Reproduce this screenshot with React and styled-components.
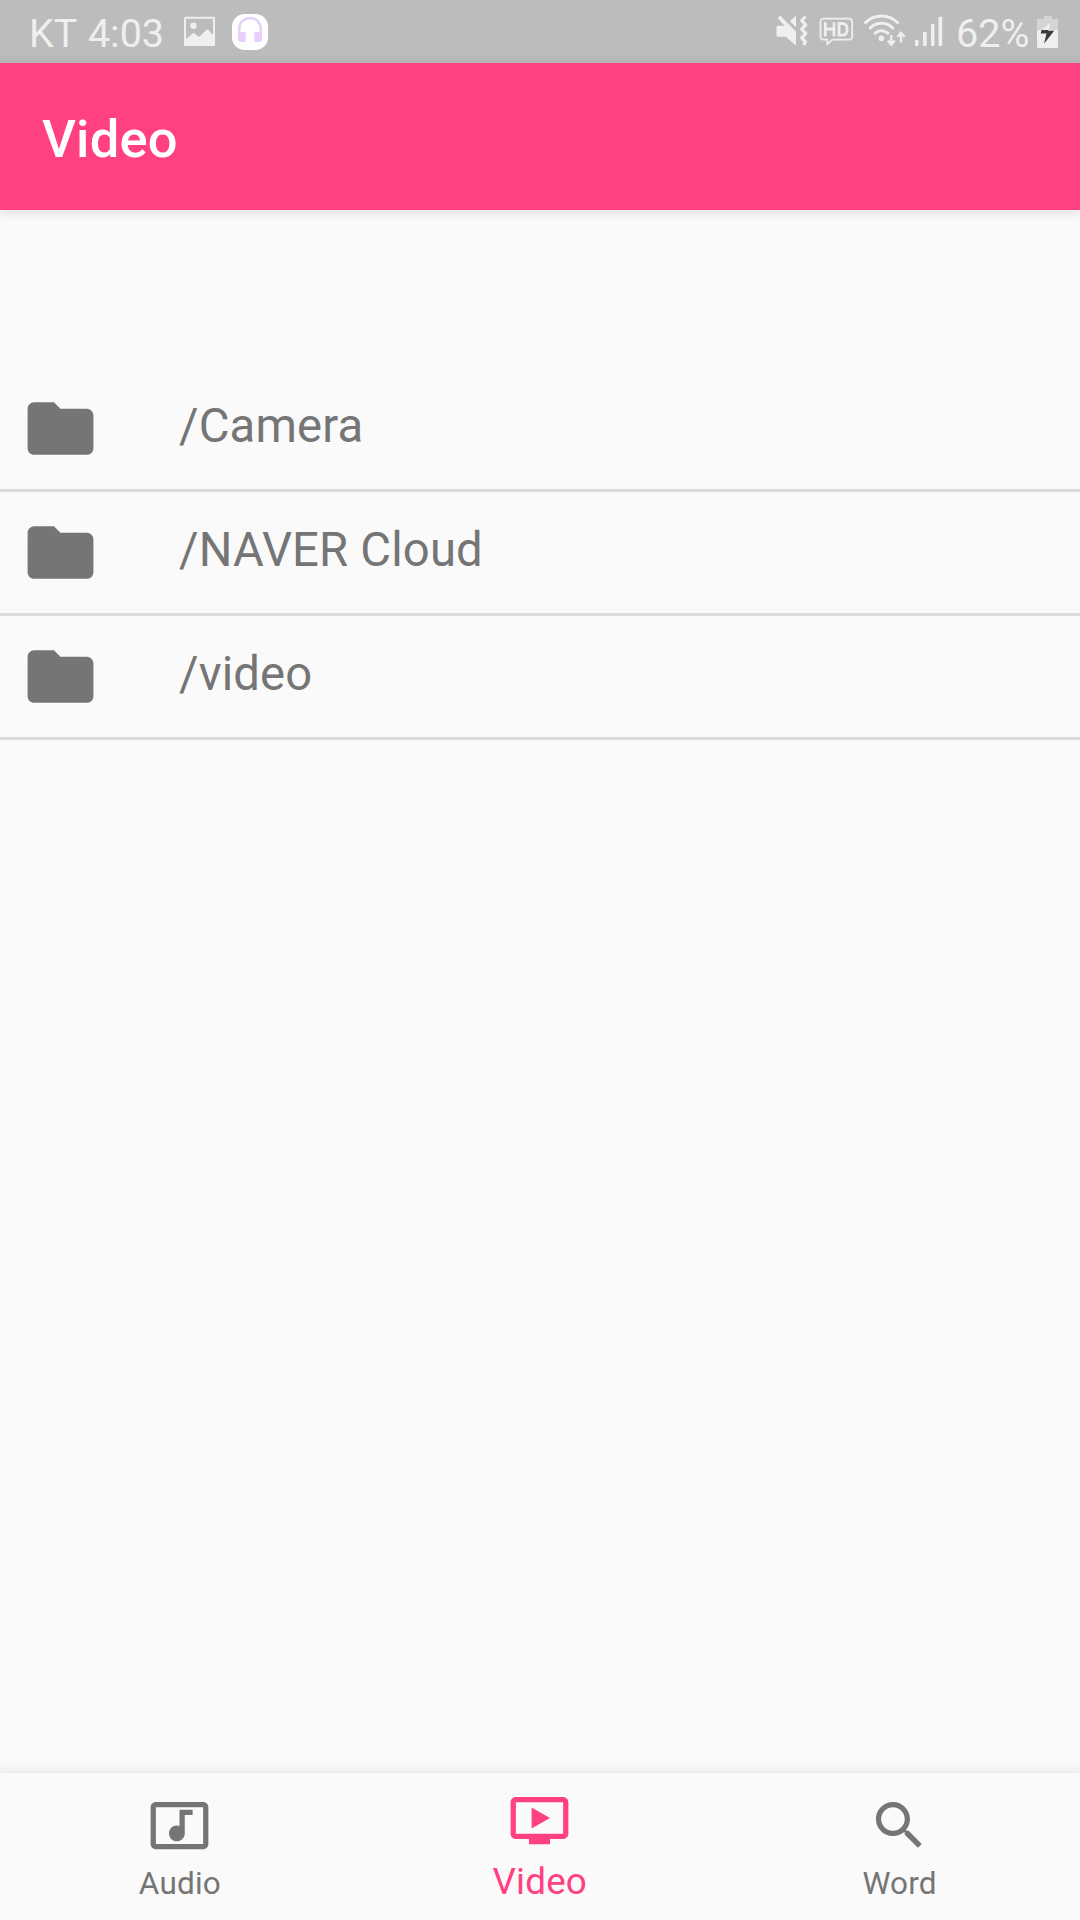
// App.jsx
import { useState } from "react";
import styled, { createGlobalStyle } from "styled-components";

const folders = ["/Camera", "/NAVER Cloud", "/video"];

const tabs = [
    {
        name: "Audio",
        path: "M21 3H3c-1.1 0-2 .9-2 2v14c0 1.1.9 2 2 2h18c1.1 0 2-.9 2-2V5c0-1.1-.9-2-2-2zm0 16H3V5h18v14zM8 15c0-1.66 1.34-3 3-3 .35 0 .69.07 1 .18V6h5v2h-3v7.03c-.02 1.64-1.35 2.97-3 2.97-1.66 0-3-1.34-3-3z",
    },
    {
        name: "Video",
        path: "M21 3H3c-1.11 0-2 .89-2 2v12c0 1.1.89 2 2 2h5v2h8v-2h5c1.1 0 1.99-.9 1.99-2L23 5c0-1.11-.9-2-2-2zm0 14H3V5h18v12zm-5-6l-7 4V7z",
    },
    {
        name: "Word",
        path: "M15.5 14h-.79l-.28-.27C15.41 12.59 16 11.11 16 9.5 16 5.91 13.09 3 9.5 3S3 5.91 3 9.5 5.91 16 9.5 16c1.61 0 3.09-.59 4.23-1.57l.27.28v.79l5 4.99L20.49 19l-4.99-5zm-6 0C7.01 14 5 11.99 5 9.5S7.01 5 9.5 5 14 7.01 14 9.5 11.99 14 9.5 14z",
    },
];

function PictureIcon() {
    return (
        <svg width="31" height="63" viewBox="0 0 31 63" fill="#efefef">
            <path
                fillRule="evenodd"
                d="M1.5 16.7h28a1.5 1.5 0 0 1 1.5 1.5v26.3a1.5 1.5 0 0 1-1.5 1.5h-28A1.5 1.5 0 0 1 0 44.5V18.2a1.5 1.5 0 0 1 1.5-1.5zM2 18.7V39l7.5-6.3 5.5 4.2 8.5-8 5.5 6.2V18.7z"
            />
            <circle cx="9.5" cy="25.7" r="3.2" />
        </svg>
    );
}

function HeadphonesIcon() {
    return (
        <svg width="36" height="63" viewBox="0 0 36 63">
            <rect y="14" width="36" height="36" rx="12.5" fill="#fff" />
            <path d="M7.2 33v-4.2a10.8 10.8 0 0 1 21.6 0V33" fill="none" stroke="#e6d2f8" strokeWidth="2.6" />
            <path d="M6 32h7.7v10H9a3 3 0 0 1-3-3zM22.3 32H30v7a3 3 0 0 1-3 3h-4.7z" fill="#e9cffc" />
        </svg>
    );
}

function MuteIcon() {
    return (
        <svg width="32" height="63" viewBox="0 0 32 63" fill="#efefef">
            <path d="M3.8 15.3L20 31.5v14L9.8 36.7H2a1.5 1.5 0 0 1-1.5-1.5v-8A1.5 1.5 0 0 1 2 25.7h6.6L1.8 18.2zM14 21.2l6-5.7v11.7z" />
            <path d="M29.5 16.5l-3.8 4 4 4.3-4 4.4 4 4.4-4 4.3 3.8 3.9-2 3" fill="none" stroke="#efefef" strokeWidth="3.2" strokeLinejoin="round" />
        </svg>
    );
}

function HdIcon() {
    return (
        <svg width="35" height="63" viewBox="0 0 35 63" fill="none" stroke="#efefef">
            <path d="M4.5 18.7h25.7a3 3 0 0 1 3 3v15a3 3 0 0 1-3 3H13.3l-5 4.6v-4.6H4.5a3 3 0 0 1-3-3v-15a3 3 0 0 1 3-3z" strokeWidth="1.8" strokeLinejoin="round" />
            <path d="M6.3 22.3v14M15 22.3v14M6.3 29H15M20 23.5v11.6h3.6a4.3 4.3 0 0 0 4.4-4.3v-3a4.3 4.3 0 0 0-4.4-4.3z" strokeWidth="2.8" />
        </svg>
    );
}

function WifiIcon() {
    return (
        <svg width="42" height="63" viewBox="0 0 42 63" fill="none" stroke="#efefef">
            <path d="M1.5 22.5a22.8 22.8 0 0 1 32 0M6.3 28a15.8 15.8 0 0 1 22.4 0M11.3 33.2a9.2 9.2 0 0 1 12.4 0" strokeWidth="3" strokeLinecap="round" />
            <circle cx="17.4" cy="38.3" r="2.9" fill="#efefef" stroke="none" />
            <path d="M27.3 35v9.5M23.8 40.5l3.5 4.2 3.5-4.2M37 42.5V33M33.3 37l3.7-4.2 3.7 4.2" strokeWidth="2.3" />
        </svg>
    );
}

function SignalIcon() {
    return (
        <svg width="28" height="63" viewBox="0 0 28 63" fill="#efefef">
            <rect x="0" y="40" width="3.6" height="6" rx="1" />
            <rect x="8" y="31.7" width="3.7" height="14.3" rx="1" />
            <rect x="16" y="24" width="3.5" height="22" rx="1" />
            <rect x="23.5" y="16.7" width="3.7" height="29.3" rx="1" />
        </svg>
    );
}

function BatteryIcon() {
    return (
        <svg width="22" height="63" viewBox="0 0 22 63">
            <path d="M7 15.7h8V19h6v11H0V19h7z" fill="#d4d4d4" />
            <path d="M0 30h21v16.5a1.5 1.5 0 0 1-1.5 1.5h-18A1.5 1.5 0 0 1 0 46.5z" fill="#efefef" />
            <path d="M13.2 22.5L5 30h7z" fill="#efefef" />
            <path d="M4.5 30l-.8 3.5h5.8L7 43.8l10.2-13H11l.5-.8z" fill="#3b3b3b" />
        </svg>
    );
}

function App() {
    const [activeTab, setActiveTab] = useState("Video");

    return (
        <Screen>
            <GlobalStyle />
            <StatusBar>
                <StatusGroup $gap={17}>
                    <StatusText>KT 4:03</StatusText>
                    <PictureIcon />
                    <HeadphonesIcon />
                </StatusGroup>
                <StatusGroup $gap={9}>
                    <StatusGroup $gap={10.5}>
                        <MuteIcon />
                        <HdIcon />
                        <WifiIcon />
                    </StatusGroup>
                    <SignalIcon />
                    <Percent>62%</Percent>
                    <BatteryIcon />
                </StatusGroup>
            </StatusBar>
            <Toolbar>
                <Title>Video</Title>
            </Toolbar>
            <FolderList>
                {folders.map((folder) => (
                    <FolderRow key={folder}>
                        <svg width="79" height="79" viewBox="0 0 24 24" fill="#757575">
                            <path d="M10 4H4c-1.1 0-1.99.9-1.99 2L2 18c0 1.1.9 2 2 2h16c1.1 0 2-.9 2-2V8c0-1.1-.9-2-2-2h-8l-2-2z" />
                        </svg>
                        <FolderName>{folder}</FolderName>
                    </FolderRow>
                ))}
            </FolderList>
            <BottomNav>
                {tabs.map((tab) => (
                    <Tab
                        key={tab.name}
                        $active={tab.name === activeTab}
                        onClick={() => setActiveTab(tab.name)}
                    >
                        <svg width="63" height="63" viewBox="0 0 24 24" fill="currentColor">
                            <path d={tab.path} />
                        </svg>
                        <TabLabel $active={tab.name === activeTab}>{tab.name}</TabLabel>
                    </Tab>
                ))}
            </BottomNav>
        </Screen>
    );
}

export default App;

// Styled components
const GlobalStyle = createGlobalStyle`
    * {
        box-sizing: border-box;
    }

    body {
        margin: 0;
        background: #fafafa;
        font-family: Roboto, sans-serif;
    }

    svg {
        display: block;
        flex: none;
    }
`;

const Screen = styled.div`
    display: flex;
    flex-direction: column;
    width: 1080px;
    height: 1920px;
    overflow: hidden;
    background: #fafafa;
`;

const StatusBar = styled.header`
    display: flex;
    flex: none;
    justify-content: space-between;
    height: 63px;
    padding: 0 21px 0 29px;
    background: #bcbcbc;
`;

const StatusGroup = styled.div`
    display: flex;
    align-items: center;
    gap: ${(props) => props.$gap}px;
`;

const StatusText = styled.span`
    width: 138px;
    padding-top: 4px;
    font-size: 39.5px;
    line-height: 60px;
    word-spacing: 1.5px;
    color: #efefef;
    white-space: nowrap;
`;

const Percent = styled(StatusText)`
    width: 72px;
    margin-left: 4px;
`;

const Toolbar = styled.div`
    display: flex;
    flex: none;
    align-items: center;
    height: 147px;
    padding: 4px 42px 0;
    background: #ff4081;
    box-shadow: 0 2px 9px 3px rgba(0, 0, 0, 0.08);
`;

const Title = styled.h1`
    margin: 0;
    font-size: 52.5px;
    font-weight: 500;
    letter-spacing: 0.2px;
    color: #fff;
`;

const FolderList = styled.main`
    flex: 1;
    padding-top: 158px;
`;

const FolderRow = styled.div`
    display: flex;
    align-items: center;
    gap: 79px;
    height: 124px;
    padding: 0 21px;
    border-bottom: 3px solid #dcdcdc;
`;

const FolderName = styled.span`
    padding-bottom: 5px;
    font-size: 47.25px;
    line-height: 56px;
    letter-spacing: 0.15px;
    color: #757575;
`;

const BottomNav = styled.nav`
    display: flex;
    flex: none;
    height: 147px;
    padding-right: 0.5px;
    background: #fafafa;
    box-shadow: 0 0 9px 3px rgba(0, 0, 0, 0.07);
`;

const Tab = styled.button`
    display: flex;
    flex: 1;
    flex-direction: column;
    align-items: center;
    justify-content: space-between;
    padding: ${(props) => (props.$active ? "16px 0 18px" : "21px 0 17px")};
    border: none;
    background: none;
    font-family: inherit;
    color: ${(props) => (props.$active ? "#ff4081" : "#757575")};
    cursor: pointer;
`;

const TabLabel = styled.span`
    font-size: ${(props) => (props.$active ? "36.75px" : "31.5px")};
    line-height: ${(props) => (props.$active ? "40px" : "38px")};
    letter-spacing: 0.2px;
`;
